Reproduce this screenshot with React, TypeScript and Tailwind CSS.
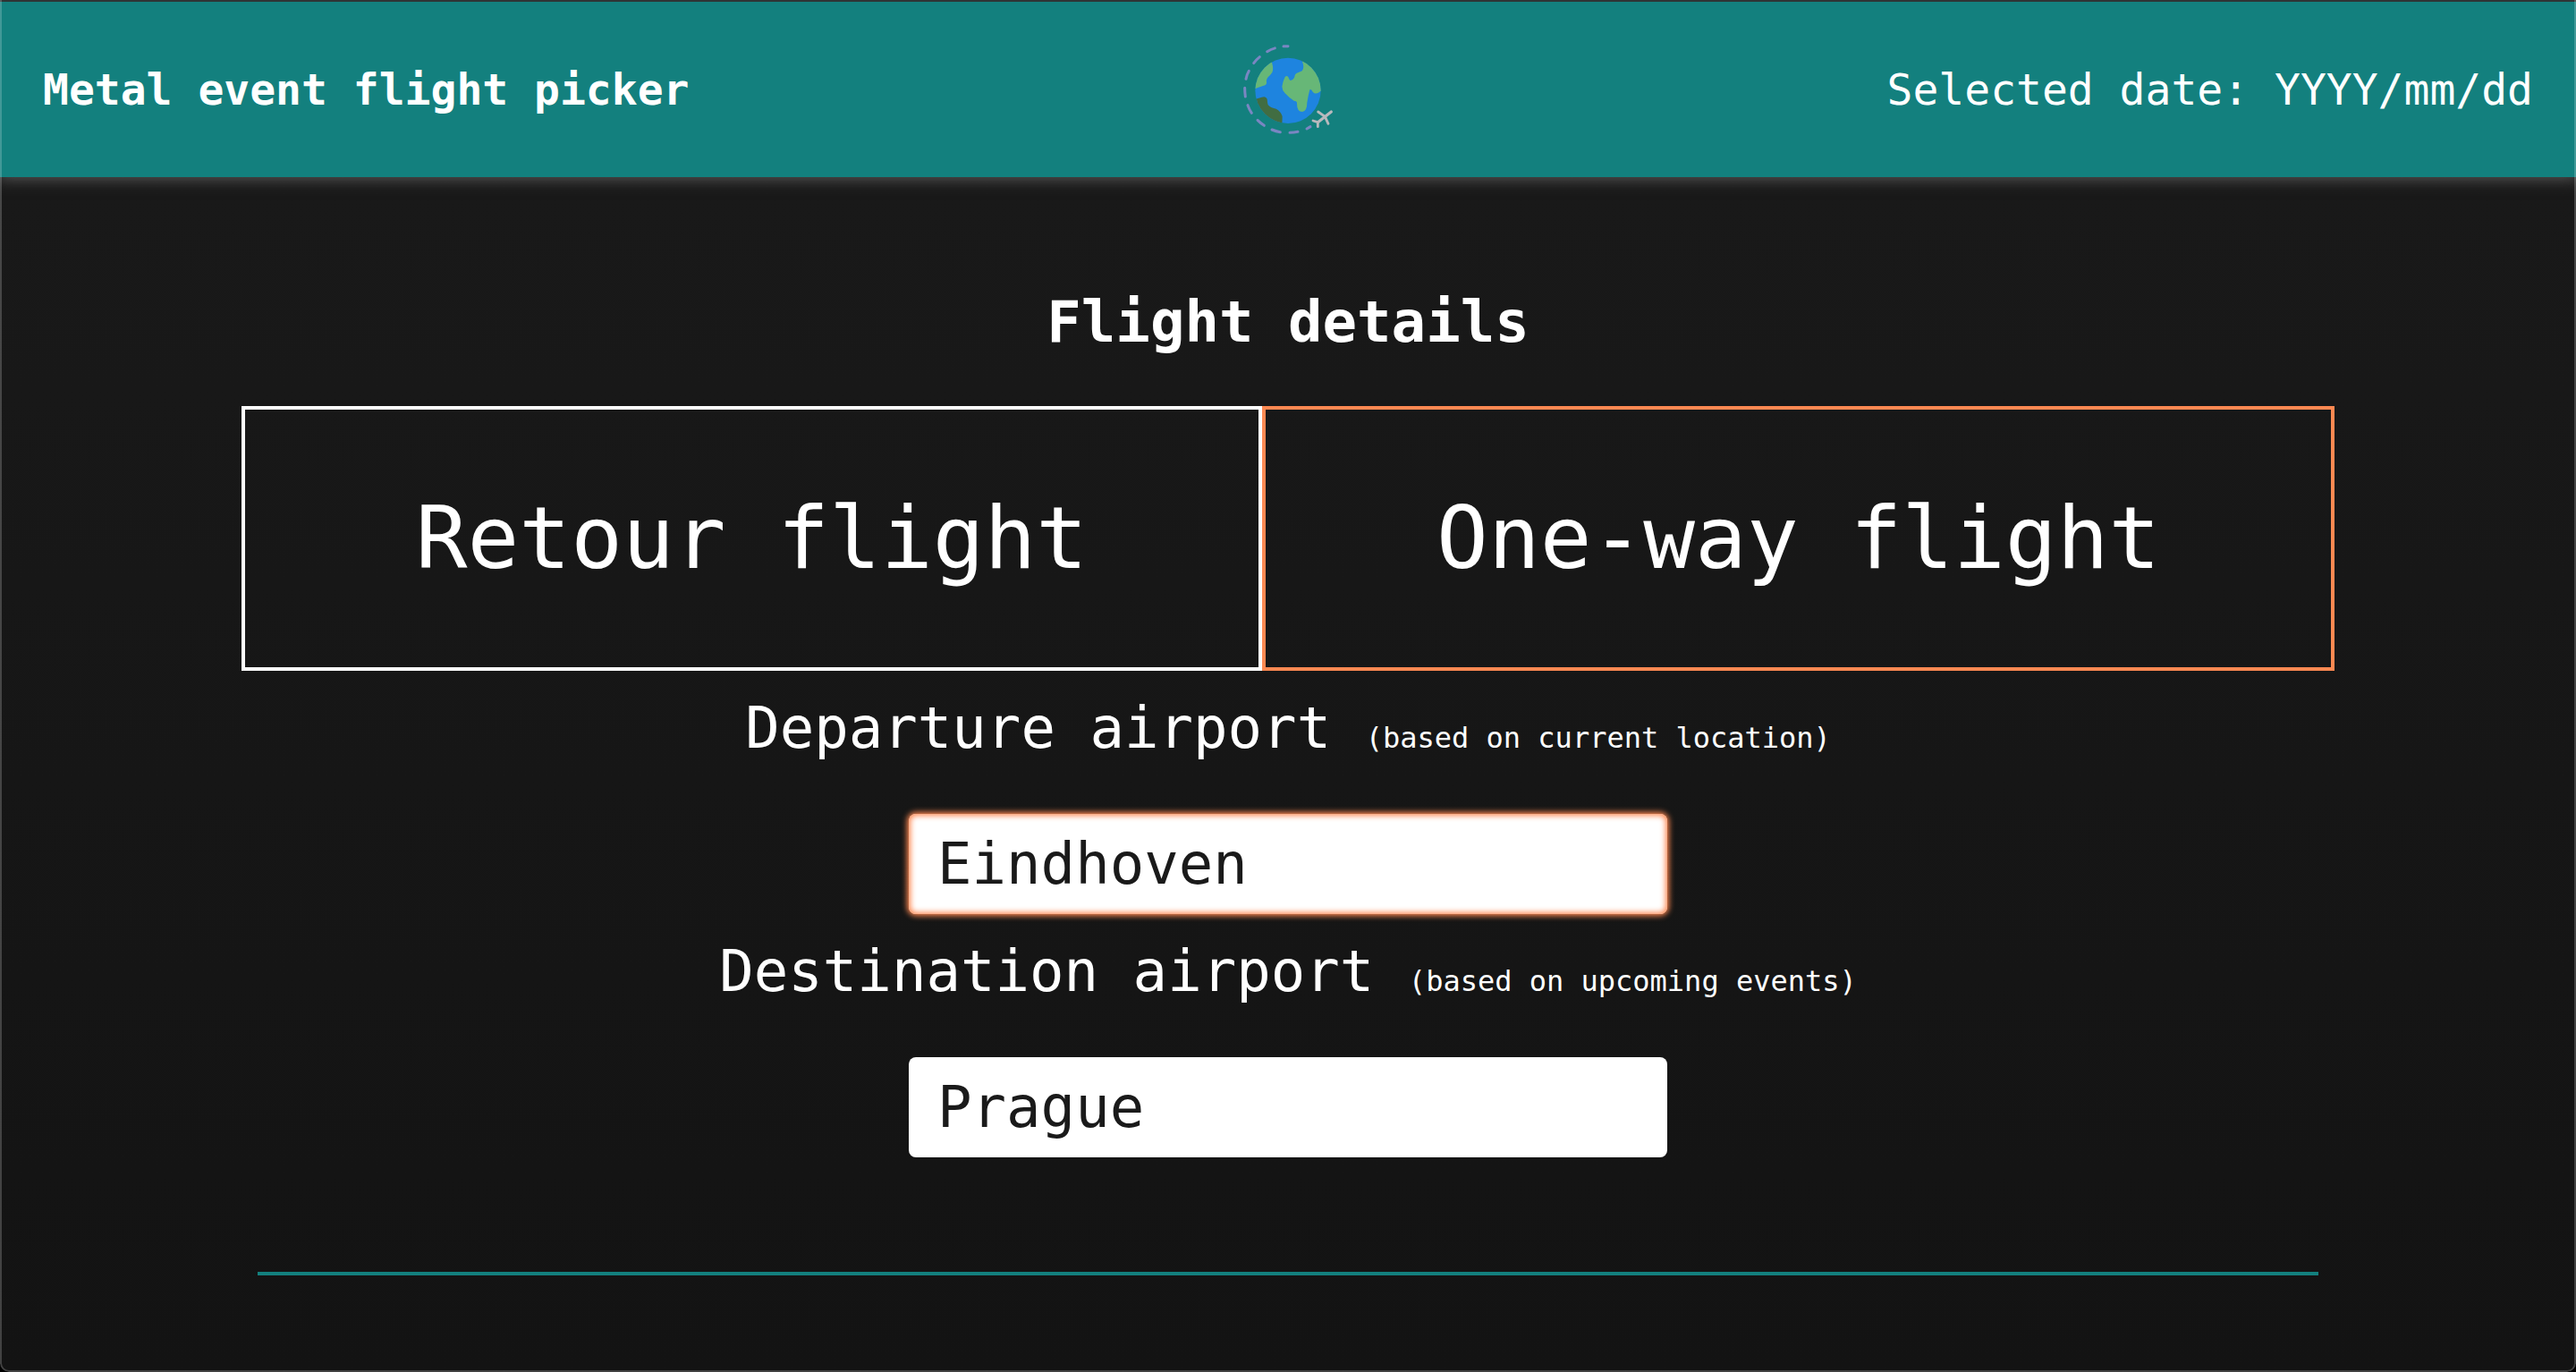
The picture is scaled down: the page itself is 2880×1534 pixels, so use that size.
import { useState } from "react";

function GlobeLogo() {
  return (
    <svg viewBox="81 51 318 318" className="size-[106px]" role="img" aria-label="Globe with a plane circling it">
      <defs>
        <clipPath id="globe">
          <circle cx="240" cy="214" r="110" />
        </clipPath>
      </defs>
      <g stroke="#7a86c2" strokeWidth="9" strokeLinecap="round" fill="none">
        <path d="M225 65.500L240 65M170 83Q182 75 196 71.500M125 122Q134 110 145 101M99 175Q102 160 109 148M95 205Q95 220 97 234M105 263Q110 277 118 289M138 313Q148 323 160 331M186 345Q200 351 214 353M246 355Q260 355 273 352M303 342L315 335" />
      </g>
      <circle cx="240" cy="214" r="110" fill="#1e84df" />
      <g clipPath="url(#globe)">
        <path d="M184 110L187 124Q192 140 187 153Q180 163 173 169Q166 177 168 184Q170 196 156 198Q140 204 120 211L110 150Z" fill="#67b777" />
        <path d="M288 105V116Q296 138 287 148L273 154Q262 158 262 168Q258 179 248 180Q244 178 241 169Q236 161 230 168Q222 184 220 200Q220 212 230 223Q246 240 260 248Q271 248 270 258Q270 285 288 285Q304 283 304 254Q308 230 313 211Q318 208 323 218Q334 232 354 212V90Z" fill="#67b777" />
        <path d="M125 244L152 236Q166 231 170 242Q171 256 173 262Q184 273 200 275Q216 283 221 300L220 330H125Z" fill="#416d42" />
      </g>
      <g stroke="#b9b9bd" strokeLinecap="round" strokeLinejoin="round" fill="none">
        <path d="M342 319L385 285" strokeWidth="9.500" />
        <path d="M341 285L364 301L375 325" strokeWidth="8.500" />
        <path d="M324 315L340 320V335" strokeWidth="8.500" />
      </g>
    </svg>
  );
}

type FieldProps = {
  id: string;
  label: string;
  hint: string;
  value: string;
  onChange: (value: string) => void;
  active?: boolean;
};

function AirportField({ id, label, hint, value, onChange, active }: FieldProps) {
  return (
    <div className="flex w-full flex-col items-center gap-8">
      <label htmlFor={id} className="text-center text-[64px] leading-[128px]">
        {label} <small className="text-[32px] leading-none">{hint}</small>
      </label>
      <input
        id={id}
        type="text"
        value={value}
        onChange={(e) => onChange(e.target.value)}
        className={
          active
            ? "h-28 w-[848px] max-w-full rounded-lg bg-white px-8 text-[64px] leading-[112px] text-[#1a1a1a] shadow-[0_0_6px_2px_#ff8952,inset_0_0_6px_2px_#ff8952] outline-none"
            : "h-28 w-[848px] max-w-full rounded-lg bg-white px-8 text-[64px] leading-[112px] text-[#1a1a1a] outline-none"
        }
      />
    </div>
  );
}

export default function App() {
  const [departure, setDeparture] = useState("Eindhoven");
  const [destination, setDestination] = useState("Prague");

  return (
    <div className="min-h-screen bg-black font-['DejaVu_Sans_Mono','Liberation_Mono',monospace] text-white">
      <div className="relative flex min-h-screen flex-col overflow-hidden rounded-b-[10px] bg-linear-to-b from-[#1a1a1a] to-[#131313]">
        <header className="grid h-[198px] grid-cols-[1fr_auto_1fr] items-center border-t-2 border-[#2f3435] bg-[#13807e] px-12 text-5xl shadow-[0_0_16px_2px_#5a5a5a]">
          <h1 className="font-bold">Metal event flight picker</h1>
          <GlobeLogo />
          <p className="text-right">Selected date: YYYY/mm/dd</p>
        </header>
        <main className="flex flex-col items-center px-8 pt-28">
          <h2 className="text-[64px] leading-[100px] font-bold">Flight details</h2>
          <div className="mt-11 flex text-8xl leading-[160px]">
            <button type="button" className="border-4 border-white px-[191px] py-16">
              Retour flight
            </button>
            <button type="button" className="border-4 border-[#ff8952] px-[191px] py-16">
              One-way flight
            </button>
          </div>
          <AirportField id="departure" label="Departure airport" hint="(based on current location)" value={departure} onChange={setDeparture} active />
          <AirportField id="destination" label="Destination airport" hint="(based on upcoming events)" value={destination} onChange={setDestination} />
        </main>
        <hr className="mx-[10%] mt-32 border-t-4 border-[#13807e]" />
        <div className="pointer-events-none absolute inset-0 rounded-b-[10px] border-x-2 border-b-2 border-white/20" />
      </div>
    </div>
  );
}
